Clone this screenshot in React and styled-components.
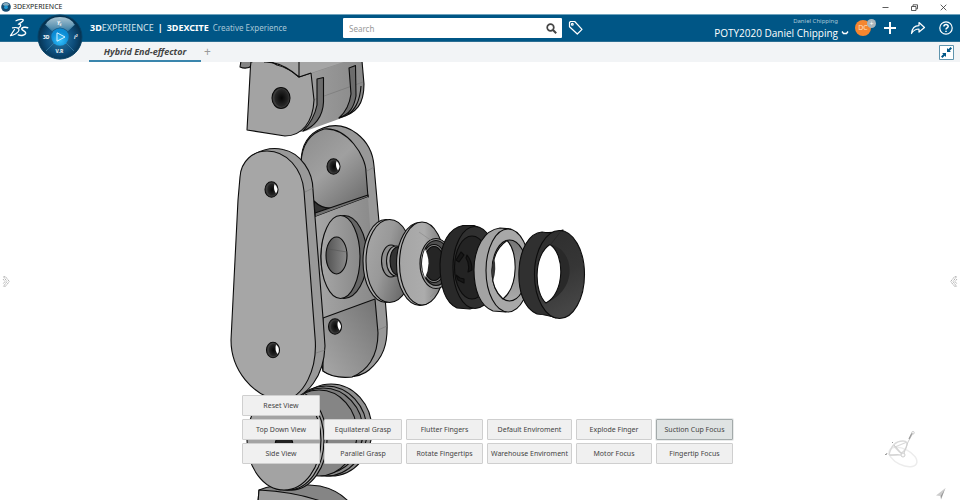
import React, { useState } from 'react';
import styled, { createGlobalStyle } from 'styled-components';

const commands = [
  ['Reset View'],
  ['Top Down View', 'Equilateral Grasp', 'Flutter Fingers', 'Default Enviroment', 'Explode Finger', 'Suction Cup Focus'],
  ['Side View', 'Parallel Grasp', 'Rotate Fingertips', 'Warehouse Enviroment', 'Motor Focus', 'Fingertip Focus'],
];

function App() {
  const [active, setActive] = useState('Suction Cup Focus');

  return (
    <Page>
      <GlobalStyle />
      <TitleBar>
        <AppIcon />
        <AppName>3DEXPERIENCE</AppName>
        <WindowButton aria-label="Minimize">
          <svg width="7" height="7" viewBox="0 0 7 7"><path d="M0.500 3.500h6" /></svg>
        </WindowButton>
        <WindowButton aria-label="Restore">
          <svg width="7" height="7" viewBox="0 0 7 7"><path d="M.5 2.500h4.500v4h-4.500zM2 2.300V.8h4.500v4H5.200" /></svg>
        </WindowButton>
        <WindowButton aria-label="Close">
          <svg width="7" height="7" viewBox="0 0 7 7"><path d="M.7.7l5.600 5.600M6.300.7L.7 6.300" /></svg>
        </WindowButton>
      </TitleBar>

      <Header>
        <Logo />
        <Brand>
          <span><b>3D</b>EXPERIENCE</span>
          <b>|</b>
          <b>3DEXCITE</b>
          <small>Creative Experience</small>
        </Brand>
        <SearchForm onSubmit={(e) => e.preventDefault()}>
          <SearchInput aria-label="Search" placeholder="Search" />
          <SearchButton aria-label="Run search">
            <svg width="11" height="11" viewBox="0 0 11 11" fill="none" stroke="#444" strokeWidth="1.700">
              <circle cx="4.500" cy="4.500" r="3.300" />
              <path d="M7 7l3.200 3.200" strokeWidth="2" />
            </svg>
          </SearchButton>
        </SearchForm>
        <HeaderButton aria-label="Tags">
          <svg width="16" height="16" viewBox="0 0 16 16">
            <path d="M1.500 2.500L2.500 1.500H6.700L14 9.300L9.300 14L1.500 6.700z" />
            <circle cx="4.300" cy="4.300" r="0.900" />
          </svg>
        </HeaderButton>
        <Account>
          <UserName>Daniel Chipping</UserName>
          <Workspace>
            POTY2020 Daniel Chipping
            <svg width="8" height="6" viewBox="0 0 8 6"><path d="M1 1.500L2.500 3.500H5.500L7 1.500" fill="none" stroke="#fff" strokeWidth="1.300" /></svg>
          </Workspace>
        </Account>
        <Avatar>
          DC
          <Status>+</Status>
        </Avatar>
        <Actions>
          <HeaderButton aria-label="Add">
            <svg width="14" height="14" viewBox="0 0 14 14"><path d="M7 1v12M1 7h12" strokeWidth="2" /></svg>
          </HeaderButton>
          <HeaderButton aria-label="Share">
            <svg width="16" height="14" viewBox="0 0 16 14">
              <path d="M1.500 12.500C2 7.500 4.500 4.600 9 4.600V1.500L14.500 6.500L9 11V8C6 8 3.500 9.200 1.500 12.500z" />
            </svg>
          </HeaderButton>
          <HeaderButton aria-label="Help">
            <svg width="14" height="14" viewBox="0 0 14 14">
              <circle cx="7" cy="7" r="6.200" />
              <path d="M4.900 5.500C5 2.900 9.300 3 9.200 5.400C9.100 6.800 7 6.900 7 8.500M7 9.700v1.300" strokeWidth="1.500" />
            </svg>
          </HeaderButton>
        </Actions>
      </Header>
      <Compass />

      <TabBar>
        <Tab href="#hybrid">Hybrid End-effector</Tab>
        <AddTab aria-label="New tab">+</AddTab>
        <Collapse aria-label="Exit full view">
          <svg width="15" height="15" viewBox="0 0 15 15">
            <path d="M.5.5h14v14H.5z" fill="#fff" stroke="#5f94ad" />
            <path d="M8 3v4h4L10.700 5.700L13 3.400L11.600 2L9.300 4.300zM7 12V8H3l1.300 1.300L2 11.600L3.400 13L5.700 10.700z" fill="#005686" />
          </svg>
        </Collapse>
      </TabBar>

      <Stage>
        <Model />
        <PanelToggle aria-label="Open left panel">
          <Chevrons />
        </PanelToggle>
        <PanelToggle aria-label="Open right panel" $flip>
          <Chevrons />
        </PanelToggle>
        <Commands>
          {commands.map((row) => (
            <React.Fragment key={row[0]}>
              {row.map((label, i) => (
                <Command
                  key={label}
                  $first={i === 0}
                  $active={label === active}
                  onClick={() => setActive(label)}
                >
                  {label}
                </Command>
              ))}
            </React.Fragment>
          ))}
        </Commands>
        <Triad />
        <Corner width="10" height="12" viewBox="0 0 10 12">
          <path d="M9.500 0L0 7.500L4.500 8z" fill="#ccc" />
          <path d="M9.500 0L4.500 8L5 11.500z" fill="#999" />
        </Corner>
      </Stage>
    </Page>
  );
}

export default App;


function AppIcon() {
  return (
    <svg width="10" height="10" viewBox="0 0 10 10">
      <circle cx="5" cy="5" r="4.800" fill="#174d72" />
      <path d="M1.500 2.800a4 4 0 0 1 7 0L5 4.500z" fill="#86aabd" />
      <circle cx="5" cy="5.200" r="1.900" fill="#229bd6" />
    </svg>
  );
}

function Logo() {
  return (
    <svg width="20" height="20" viewBox="0 0 20 20" fill="none" stroke="#fff" strokeWidth="1.200" strokeLinecap="round" strokeLinejoin="round">
      <path d="M7 2.800C9.500 1.500 14 .8 14.300 2C14.500 3.200 11.500 5 9.300 6.200C11.500 6 12.200 7 11.300 8.300C10.800 9 10.300 9.300 9.800 9.700" />
      <path d="M3.500 9.900C7.500 8.900 10.500 10 10 12.200C9.300 15 5 17.300 1.500 17.600L5.500 11.500" />
      <path d="M18.700 9.700C16.500 8.700 12.900 9.300 12.700 10.900C12.600 12.300 17 13.200 16.700 15.200C16.200 17.300 12.300 18 9.300 16.900" strokeWidth="1.500" />
    </svg>
  );
}

function Compass() {
  return (
    <CompassButton aria-label="Compass">
      <svg width="46" height="46" viewBox="0 0 46 46">
        <defs>
          <radialGradient id="dial" cx=".5" cy=".55" r=".5">
            <stop offset="0" stopColor="#2f7ba5" />
            <stop offset=".65" stopColor="#0d4d7b" />
            <stop offset="1" stopColor="#063250" />
          </radialGradient>
          <linearGradient id="cap" x2="0" y2="1">
            <stop offset="0" stopColor="#a9c4d2" />
            <stop offset="1" stopColor="#3d7fa5" />
          </linearGradient>
          <radialGradient id="play" cy=".7">
            <stop offset="0" stopColor="#36c2fc" />
            <stop offset="1" stopColor="#0b8bd4" />
          </radialGradient>
        </defs>
        <circle cx="23" cy="23" r="22" fill="url(#dial)" stroke="#064267" />
        <path d="M8.500 11Q12 3 23 3T37.500 11L31 17Q23 10 15 17z" fill="url(#cap)" />
        <path d="M9 37l8-8M37 37l-8-8M8 10l9 8M38 10l-9 8" stroke="#3f83a8" opacity=".7" />
        <circle cx="23" cy="23" r="8.700" fill="url(#play)" />
        <path d="M20 18.800L28 23L20 27.200z" fill="none" stroke="#d9f2ff" />
        <g fill="#fff" fontFamily="Noto Sans, sans-serif" fontSize="5" fontWeight="700">
          <text x="6" y="25">3D</text>
          <text x="18.500" y="38.500">V.R</text>
          <text x="37" y="25" fontStyle="italic">i²</text>
          <text x="20" y="11" fontStyle="italic">Y₆</text>
        </g>
      </svg>
    </CompassButton>
  );
}

function Chevrons() {
  return (
    <svg width="8" height="11" viewBox="0 0 8 11" fill="#fff" stroke="#aaa" strokeWidth=".9" strokeDasharray="1.500 .5">
      <path d="M1.500 .7L3.500 .7L7.300 5.500L3.500 10.300L1.500 10.300L5 5.500z" />
      <path d="M1 3L3 5.500L1 8" />
    </svg>
  );
}

function Triad() {
  return (
    <TriadSvg width="36" height="38" viewBox="0 0 36 38" fill="none" stroke="#cecece">
      <ellipse cx="18" cy="26" rx="15" ry="8" transform="rotate(26 18 26)" stroke="#ececec" strokeWidth="1.500" />
      <path d="M4 24Q7 10 18 10Q24 10 21 17Q17 25 4 24M9 15Q14 21 18 24M10 16L22 11" stroke="#dadada" strokeWidth="1.300" />
      <path d="M18 25L23 11L28 2M5 24h13M9 14l9 10" />
      <path d="M24 8L27 2" stroke="#999" strokeWidth="1.200" />
      <circle cx="28" cy="1.800" r="1.300" />
      <circle cx="18" cy="24" r="2" fill="#fafafa" />
      <path d="M0 23l1 1M1 24l1-2M7 11l1 1" stroke="#999" />
    </TriadSvg>
  );
}

function Bore({ cx, cy, rx = 6.500, ry = 7.800, open }) {
  return (
    <g>
      <ellipse cx={cx} cy={cy} rx={rx} ry={ry} fill="#3c3c3c" />
      <ellipse cx={cx + 0.600} cy={cy} rx={rx - 1.700} ry={ry - 1.500} fill="url(#bore)" stroke="none" />
      {open && <path d={`M${cx + 3} ${cy - 5.500}q5 4.500 1.500 9.500q-3-4-1.500-9.500z`} fill="#fff" stroke="none" />}
    </g>
  );
}

// Exploded finger assembly, drawn back to front
function Model() {
  return (
    <ModelSvg viewBox="0 62 960 438" preserveAspectRatio="xMidYMid slice" role="img" aria-label="Hybrid end-effector">
      <defs>
        <linearGradient id="side">
          <stop offset="0" stopColor="#a6a6a6" />
          <stop offset="1" stopColor="#898989" />
        </linearGradient>
        <linearGradient id="lug" x2=".7" y2="1">
          <stop offset="0" stopColor="#8c8c8c" />
          <stop offset=".5" stopColor="#a0a0a0" />
          <stop offset="1" stopColor="#6e6e6e" />
        </linearGradient>
        <linearGradient id="lower" x1="1" x2="0" y2="1">
          <stop offset="0" stopColor="#737373" />
          <stop offset="1" stopColor="#a8a8a8" />
        </linearGradient>
        <linearGradient id="disc" x2="1" y2=".5">
          <stop offset="0" stopColor="#a9a9a9" />
          <stop offset=".5" stopColor="#999" />
          <stop offset="1" stopColor="#686868" />
        </linearGradient>
        <linearGradient id="cup" x2="1" y2="0">
          <stop offset="0" stopColor="#a5a5a5" />
          <stop offset=".55" stopColor="#acacac" />
          <stop offset="1" stopColor="#777" />
        </linearGradient>
        <linearGradient id="pit">
          <stop offset="0" stopColor="#525252" />
          <stop offset="1" stopColor="#8b8b8b" />
        </linearGradient>
        <linearGradient id="wall" x2="0" y2="1">
          <stop offset="0" stopColor="#777" />
          <stop offset="1" stopColor="#aaa" />
        </linearGradient>
        <linearGradient id="lip" x2=".3" y2="1">
          <stop offset="0" stopColor="#2d2d2d" />
          <stop offset=".6" stopColor="#363636" />
          <stop offset="1" stopColor="#454545" />
        </linearGradient>
        <radialGradient id="bore">
          <stop offset="0" stopColor="#050505" />
          <stop offset="1" stopColor="#2b2b2b" />
        </radialGradient>
      </defs>

      <g stroke="#0c0c0c" strokeWidth="1.100" strokeLinejoin="round">
        {/* upper phalanx */}
        <path d="M241 61L240 67Q247 70 253 65L260 61z" fill="#848484" />
        <path d="M299 61H362L364 84C364 105 357 113 339 119L303 132L280 130z" fill="url(#side)" stroke="none" />
        <path d="M362 61L364 84C364 104 357 113 339 118" fill="none" />
        <path d="M313 100L352 86L363 82M300 77L362 55" stroke="#777" strokeWidth=".6" />
        <path d="M251 62Q267 58 277 65Q289 68 299 77L311 73L314 100C313 122 302 136 285 136L247 130L250.500 66z" fill="#a3a3a3" />
        <path d="M263 61Q280 60 299 77L311 73L350 60H298z" fill="#a5a5a5" stroke="none" />
        <path d="M264 62Q281 61 299 77L311 73M299 77V61" fill="none" />
        <path d="M317 79L323.500 77.500V102C323 117 314 127 303 131Q314 120 317 105z" fill="#6c6c6c" />
        <path d="M349 68L355.500 65.500L356 96C354 107 350 114 339 118Q349 109 351 94z" fill="#6c6c6c" />
        <path d="M361 86C360 102 354 111 348 114" fill="none" />
        <Bore cx={281} cy={98} rx={9} ry={10.500} />

        {/* lower hub */}
        <ellipse cx="331" cy="430" rx="41" ry="46" fill="#909090" />
        <ellipse cx="326" cy="431" rx="41" ry="45" fill="#888" />
        <ellipse cx="323" cy="431" rx="40" ry="43" fill="#7d7d7d" />
        <ellipse cx="319" cy="433" rx="38" ry="43" fill="#858585" />
        <path d="M258 502L259 490Q280 481 320 486Q338 490 349 502z" fill="#858585" />
        <path d="M259 490Q297 492 323 502H258z" fill="#9c9c9c" />
        <ellipse cx="291" cy="440" rx="36" ry="50" fill="#999" />
        <ellipse cx="288" cy="440" rx="36" ry="50" fill="#aaa" />
        <ellipse cx="284" cy="440" rx="37" ry="50" fill="#a3a3a3" />
        <ellipse cx="284" cy="445" rx="9" ry="10" fill="#222" />

        {/* rear bracket */}
        <path d="M301 163C301 145 309 133 323 128C347 119 372 139 374 166L379 222L387 322C388 345 383 358 369 370C359 379 335 379 323 371L310 290z" fill="#989898" />
        <path d="M301 163C302 143 311 133 324 129C347 127 366 156 366 172L368 197L315 216z" fill="url(#lug)" />
        <path d="M367 171L374 167M378 330L387 326" stroke="#777" strokeWidth=".6" />
        <path d="M314 201Q322 209 332 208L315 216z" fill="#333" />
        <path d="M315 213L368 195V197L315 217z" fill="#707070" />
        <path d="M315 217L368 197L375 299L323 318z" fill="url(#side)" stroke="none" />
        <path d="M323 318L375 299L378 333C378 357 367 371 352 377C342 378 331 377 323 371z" fill="url(#lower)" />
        <Bore cx={333.500} cy={166.500} open />
        <Bore cx={335} cy={326.500} open />
        <ellipse cx="344" cy="257" rx="23" ry="41.500" fill="#666" />
        <ellipse cx="340.500" cy="257" rx="19.500" ry="41.500" fill="url(#side)" />
        <ellipse cx="336.500" cy="255.500" rx="10.500" ry="18.500" fill="url(#pit)" />
        <path d="M328 249L347 252" stroke="#555" strokeWidth=".6" />

        {/* front plate */}
        <path d="M253 155Q268 146 283 149.500C301 153 313 172 313 190L315 217L323 318L325 346C324 375 309 398 283 401z" fill="#999" />
        <path d="M240 177C241 161 253 151 267 151C287 151 302 169 304 191L315 337C318 369 304 398 282 401C252 397 231 369 231 340L238 200z" fill="#a6a6a6" />
        <path d="M305 192L313 188M316 353L325 350" stroke="#777" strokeWidth=".6" />
        <Bore cx={271.500} cy={189.500} open />
        <Bore cx={273} cy={350} open />

        {/* bellows discs */}
        <ellipse cx="386" cy="261" rx="23" ry="41.500" fill="#aaa" />
        <ellipse cx="389.500" cy="261" rx="23.500" ry="41.500" fill="url(#disc)" />
        <ellipse cx="391" cy="261" rx="9.500" ry="16" fill="#8d8d8d" />
        <ellipse cx="396" cy="261" rx="9.500" ry="15" fill="#a1a1a1" />
        <ellipse cx="398" cy="261" rx="8" ry="14" fill="#333" />
        <ellipse cx="420" cy="264" rx="23.500" ry="41.500" fill="#aaa" />
        <ellipse cx="422" cy="263.500" rx="22.500" ry="41.500" fill="url(#cup)" />
        <ellipse cx="436" cy="263.500" rx="16" ry="25" fill="#929292" />
        <ellipse cx="436" cy="263" rx="14" ry="22.500" fill="#505050" />
        <ellipse cx="434" cy="263.500" rx="12" ry="19" fill="#858585" />
        <ellipse cx="434" cy="263.500" rx="10" ry="17" fill="#252525" />
        <path d="M425 249Q432 263 425 278Q419 264 425 249z" fill="#fff" stroke="none" />
        <path d="M419 232L432 241M430 297L438 290" stroke="#888" strokeWidth=".6" />

        {/* valve plate */}
        <path d="M463 225.500H474C490 230 493 250 493 267C493 287 484 307 470 309L457 308C444 302 440 284 440 264C441 243 449 228 463 225.500z" fill="#292929" />
        <ellipse cx="475" cy="267.500" rx="22" ry="41" fill="#303030" />
        <ellipse cx="472" cy="267.500" rx="17.500" ry="31.500" fill="#232323" />
        <path d="M461 252l-5 8l3 2l5-7zM467 255q5 6 5 15l-4 2q2-8-2-14zM456 275l2 5l6 3v-4l-4-1z" fill="#171717" />

        {/* spacer ring */}
        <path d="M500 228L511 229L506 312L493 311C480 306 474 290 474 270C474 248 484 230 500 228z" fill="#a3a3a3" />
        <ellipse cx="508" cy="270.500" rx="22" ry="41.500" fill="#a8a8a8" />
        <ellipse cx="509.500" cy="270.500" rx="17.500" ry="30.500" fill="url(#wall)" />
        <path d="M507 240.500C518 251 519 286 503 299C487 285 489 253 507 240.500z" fill="#fff" />
        <path d="M494 257Q497 269 493 281Q491 269 494 257z" fill="#333" stroke="none" />

        {/* suction lip */}
        <path d="M542 232Q552 234 563 230L556 318Q548 315 537 314C523 308 518 289 519 270C520 249 529 233 542 232z" fill="#303030" />
        <ellipse cx="559.500" cy="274.500" rx="25" ry="44" fill="url(#lip)" />
        <path d="M550 244.500C576 249 578 292 545 303C564 291 564 256 550 244.500z" fill="#292929" stroke="none" />
        <path d="M550 244.500C565 254 565 293 546 303C534 293 533 255 550 244.500z" fill="#fff" />
        <path d="M561 231L551 244" stroke="#222" strokeWidth=".6" />
      </g>
    </ModelSvg>
  );
}


const GlobalStyle = createGlobalStyle`
  * {
    box-sizing: border-box;
  }

  body {
    margin: 0;
    font-family: 'Noto Sans', 'Open Sans', sans-serif;
    background-color: white;
  }

  button, input {
    font-family: inherit;
    border: none;
    padding: 0;
    background: none;
  }

  svg {
    display: block;
    flex-shrink: 0;
  }
`;

const Page = styled.div`
  display: flex;
  flex-direction: column;
  min-height: 100vh;
  position: relative;
`;

const TitleBar = styled.div`
  display: flex;
  align-items: center;
  height: 14px;
  padding: 0 5px 0 1px;
`;

const AppName = styled.span`
  margin-left: 2px;
  margin-right: auto;
  font-size: 7px;
  line-height: 10px;
  color: #222;
`;

const WindowButton = styled.button`
  width: 23px;
  height: 12px;
  margin-left: 6px;
  display: flex;
  align-items: center;
  justify-content: center;

  svg {
    fill: none;
    stroke: #333;
    stroke-width: 0.8;
  }
`;

const Header = styled.header`
  display: flex;
  align-items: center;
  height: 28px;
  padding: 0 7px 0 9px;
  background-color: #005686;
  border-top: 1px solid #6fa3bd;
  border-bottom: 1px solid #2b6e93;
  color: white;
`;

const Brand = styled.div`
  display: flex;
  align-items: baseline;
  gap: 4px;
  width: 253px;
  margin-left: 61px;
  font-size: 9px;
  line-height: 14px;
  white-space: nowrap;
  color: #d5e4ec;

  b {
    color: white;
  }

  small {
    font-size: 8px;
    color: #a9c7d7;
  }
`;

const SearchForm = styled.form`
  display: flex;
  flex: 0 1 219px;
  height: 20px;
  background-color: white;
  border-radius: 1px;
`;

const SearchInput = styled.input`
  flex: 1;
  min-width: 0;
  padding-left: 6px;
  font-size: 8px;
  outline: none;

  &::placeholder {
    color: #999;
  }
`;

const SearchButton = styled.button`
  display: flex;
  align-items: center;
  justify-content: center;
  width: 22px;
`;

const HeaderButton = styled.button`
  display: flex;
  margin-left: 6px;

  svg {
    fill: none;
    stroke: white;
    stroke-width: 1.2;
    stroke-linejoin: round;
  }
`;

const Account = styled.div`
  margin-left: auto;
  display: flex;
  flex-direction: column;
  align-items: flex-end;
`;

const UserName = styled.span`
  padding-right: 11px;
  font-size: 6px;
  line-height: 10px;
  color: #a9c7d7;
`;

const Workspace = styled.button`
  display: flex;
  align-items: center;
  gap: 3px;
  font-family: 'Open Sans', sans-serif;
  font-size: 10px;
  line-height: 14px;
  color: white;
`;

const Avatar = styled.div`
  position: relative;
  width: 16px;
  height: 16px;
  margin-left: 6px;
  border-radius: 50%;
  background-color: #f5862f;
  font-size: 7px;
  line-height: 16px;
  text-align: center;
  color: #ffe0c5;
`;

const Status = styled.span`
  position: absolute;
  top: -1px;
  right: -5px;
  width: 9px;
  height: 9px;
  border-radius: 50%;
  background-color: #a9b6bd;
  line-height: 9px;
  color: white;
`;

const Actions = styled.div`
  display: flex;
  align-items: center;
  gap: 7px;
  margin-left: 6px;
`;

const CompassButton = styled.button`
  position: absolute;
  top: 14px;
  left: 37px;
`;

const TabBar = styled.nav`
  display: flex;
  align-items: center;
  height: 20px;
  padding: 0 6px 0 89px;
  background-color: #f2f4f6;
`;

const Tab = styled.a`
  width: 112px;
  height: 19px;
  border-bottom: 2px solid #3a86ad;
  font-family: 'Open Sans', sans-serif;
  font-size: 9px;
  font-style: italic;
  font-weight: 700;
  line-height: 18px;
  text-align: center;
  text-decoration: none;
  color: #444;
`;

const AddTab = styled.button`
  margin-left: 3px;
  font-size: 12px;
  line-height: 16px;
  color: #999;
`;

const Collapse = styled.button`
  margin-left: auto;
`;

const Stage = styled.main`
  position: relative;
  flex: 1;
  display: flex;
  align-items: center;
  justify-content: space-between;
  overflow: hidden;
`;

const ModelSvg = styled.svg`
  position: absolute;
  inset: 0;
  width: 100%;
  height: 100%;
`;

const PanelToggle = styled.button`
  position: relative;
  margin: 0 2px;
  transform: ${(props) => (props.$flip ? 'scaleX(-1)' : 'none')};
`;

const Commands = styled.div`
  position: absolute;
  left: 0;
  right: 0;
  bottom: 36px;
  display: grid;
  grid-template-columns: 78px 78px 77px 85px 76px 77px;
  justify-content: center;
  gap: 3px 4px;
  padding-left: 15px;
`;

const Command = styled.button`
  height: 21px;
  border: 1px solid ${(props) => (props.$active ? '#a3aaaa' : '#cfcfcf')};
  border-radius: 1px;
  background-color: ${(props) => (props.$active ? '#dfe3e3' : '#f0f0f0')};
  box-shadow: ${(props) => (props.$active ? '0 0 0 1px #e9ebeb' : 'none')};
  font-size: 7px;
  line-height: 18px;
  white-space: nowrap;
  color: #444;
  grid-column: ${(props) => (props.$first ? '1' : 'auto')};
`;

const TriadSvg = styled.svg`
  position: absolute;
  right: 39px;
  bottom: 31px;
`;

const Corner = styled.svg`
  position: absolute;
  right: 14px;
  bottom: 0;
`;
